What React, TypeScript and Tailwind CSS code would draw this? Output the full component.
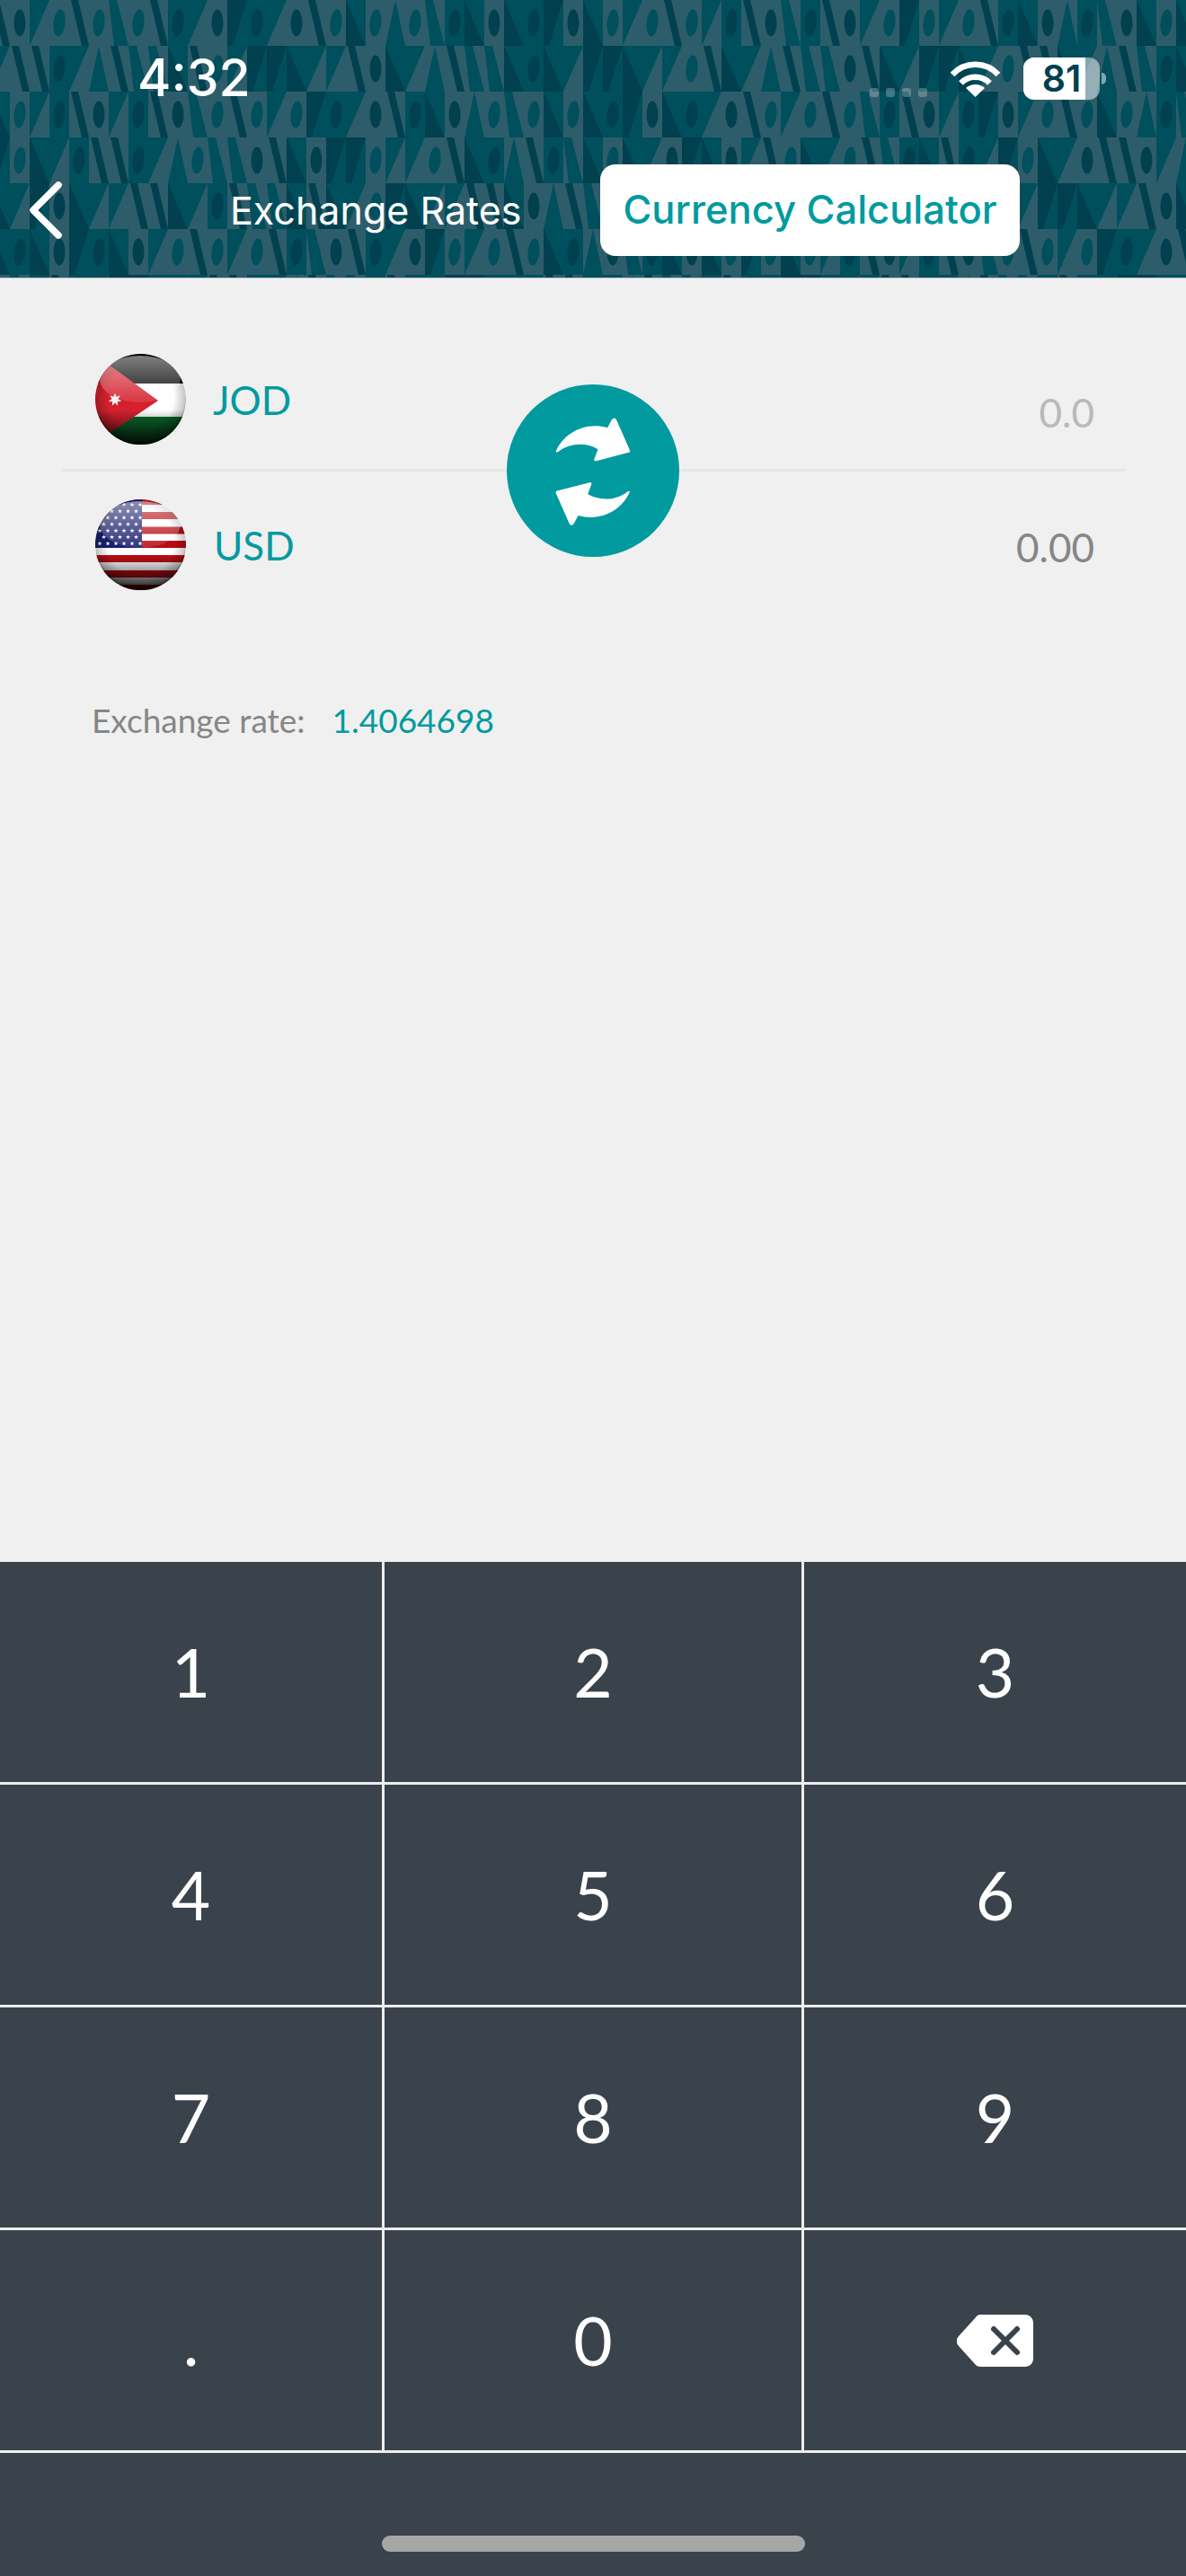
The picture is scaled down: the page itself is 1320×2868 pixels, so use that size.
const TILE_W = 22
const TILE_H = 51
const LIGHT = '#2d5d6b'
const BASE = '#004f5d'
const DARK = '#01404f'

// wedge tiles of the header artwork, ovals are picked per row below
const WEDGES = [4, 3, 5, 4, 6, 3, 4, 5, 8, 6, 5, 3, 4, 8, 3, 7, 5]
const OVALS = [0, 2, 1, 0, 2, 0, 1]

function kindAt(r: number, c: number) {
  const n = c * 5 + r * 7
  const wedge = WEDGES[n % WEDGES.length]
  const oval = OVALS[(c + r * 3) % OVALS.length]
  if (r === 0 || r === 2 || r === 5) return c % 2 === 1 ? oval : wedge
  if (r === 3) return c % 3 === 1 ? oval : wedge
  if (r === 6) return wedge
  return c % 8 === 3 ? oval : wedge
}

function Tile({ kind, x, y }: { kind: number; x: number; y: number }) {
  const w = TILE_W
  const h = TILE_H
  const cx = x + w / 2
  const cy = y + h / 2
  switch (kind) {
    case 0:
      return (
        <g>
          <rect x={x} y={y} width={w} height={h} fill={LIGHT} />
          <ellipse cx={cx} cy={cy} rx={6.5} ry={15} fill={BASE} transform={`rotate(6 ${cx} ${cy})`} />
        </g>
      )
    case 1:
      return (
        <g>
          <rect x={x} y={y} width={w} height={h} fill={BASE} />
          <ellipse cx={cx} cy={cy} rx={6.5} ry={15} fill={DARK} transform={`rotate(6 ${cx} ${cy})`} />
        </g>
      )
    case 2:
      return (
        <g>
          <rect x={x} y={y} width={w} height={h} fill={LIGHT} />
          <ellipse cx={cx} cy={cy} rx={6.5} ry={15} fill={DARK} />
        </g>
      )
    case 3:
      return (
        <g>
          <rect x={x} y={y} width={w} height={h} fill={BASE} />
          <path d={`M${x} ${y}L${x + w} ${y + h}H${x}Z`} fill={DARK} />
        </g>
      )
    case 4:
      return (
        <g>
          <rect x={x} y={y} width={w} height={h} fill={LIGHT} />
          <path d={`M${x + 2} ${y}H${x + 10}L${x + w} ${y + h}H${x + 14}Z`} fill={DARK} />
        </g>
      )
    case 5:
      return (
        <g>
          <rect x={x} y={y} width={w} height={h} fill={BASE} />
          <path d={`M${x + w} ${y}V${y + h}H${x}Z`} fill={LIGHT} />
        </g>
      )
    case 6:
      return (
        <g>
          <rect x={x} y={y} width={w} height={h} fill={DARK} />
          <path d={`M${x + w} ${y}V${y + h}H${x + 6}Z`} fill={BASE} />
        </g>
      )
    case 8:
      return (
        <g>
          <rect x={x} y={y} width={w} height={h} fill={LIGHT} />
          <path d={`M${x} ${y}H${x + 9}L${x + w} ${y + h}H${x + 6}Z`} fill={BASE} />
        </g>
      )
    default:
      return (
        <g>
          <rect x={x} y={y} width={w} height={h} fill={LIGHT} />
          <path d={`M${x} ${y + h}L${x + 11} ${y}L${x + w} ${y + h}Z`} fill={BASE} />
        </g>
      )
  }
}

function HeaderPattern() {
  const tiles = []
  for (let r = 0; r < 7; r++) {
    for (let c = 0; c < 62; c++) {
      tiles.push(<Tile key={`${r}-${c}`} kind={kindAt(r, c)} x={c * TILE_W - 11} y={r * TILE_H} />)
    }
  }
  return (
    <svg className="absolute inset-0" width="1320" height="310" viewBox="0 0 1320 310">
      {tiles}
    </svg>
  )
}

function starPoints(cx: number, cy: number, outer: number, inner: number, n: number) {
  const pts = []
  for (let i = 0; i < n * 2; i++) {
    const rad = i % 2 === 0 ? outer : inner
    const a = (Math.PI * i) / n - Math.PI / 2
    pts.push(`${(cx + rad * Math.cos(a)).toFixed(2)},${(cy + rad * Math.sin(a)).toFixed(2)}`)
  }
  return pts.join(' ')
}

function Gloss({ id }: { id: string }) {
  return (
    <>
      <defs>
        <radialGradient id={`${id}-edge`} cx="50%" cy="47%" r="52%">
          <stop offset="70%" stopColor="#000" stopOpacity="0" />
          <stop offset="94%" stopColor="#000" stopOpacity="0.22" />
          <stop offset="100%" stopColor="#000" stopOpacity="0.5" />
        </radialGradient>
        <linearGradient id={`${id}-shine`} x1="0" y1="0" x2="0" y2="1">
          <stop offset="0%" stopColor="#fff" stopOpacity="0.5" />
          <stop offset="100%" stopColor="#fff" stopOpacity="0.1" />
        </linearGradient>
        <linearGradient id={`${id}-low`} x1="0" y1="0" x2="0" y2="1">
          <stop offset="62%" stopColor="#000" stopOpacity="0" />
          <stop offset="100%" stopColor="#000" stopOpacity="0.85" />
        </linearGradient>
      </defs>
      <rect width="101" height="101" fill={`url(#${id}-low)`} />
      <circle cx="50.5" cy="50.5" r="50.5" fill={`url(#${id}-edge)`} />
      <ellipse cx="50" cy="28" rx="45" ry="26" fill={`url(#${id}-shine)`} />
    </>
  )
}

function JordanFlag() {
  return (
    <svg width="101" height="101" viewBox="0 0 101 101">
      <clipPath id="jod-clip">
        <circle cx="50.5" cy="50.5" r="50.5" />
      </clipPath>
      <g clipPath="url(#jod-clip)">
        <rect width="101" height="33" fill="#000" />
        <rect y="33" width="101" height="37" fill="#fff" />
        <rect y="70" width="101" height="31" fill="#0a6b2c" />
        <path d="M0 1L70 52L0 99Z" fill="#d5202e" />
        <polygon points={starPoints(22, 51, 7.5, 3.6, 7)} fill="#f2f2f2" />
        <Gloss id="jod" />
      </g>
    </svg>
  )
}

function UsaFlag() {
  const stripes = [-2, 14, 30.5, 46, 62, 79, 95]
  const stars = []
  for (let r = 0; r < 7; r++) {
    for (let c = 0; c < 6; c++) {
      const x = 5 + c * 9 + (r % 2 ? 4.5 : 0)
      if (x < 51) stars.push(<polygon key={`${r}-${c}`} points={starPoints(x, 6 + r * 7.2, 2.6, 1.1, 5)} fill="#fff" />)
    }
  }
  return (
    <svg width="101" height="101" viewBox="0 0 101 101">
      <clipPath id="usd-clip">
        <circle cx="50.5" cy="50.5" r="50.5" />
      </clipPath>
      <g clipPath="url(#usd-clip)">
        <rect width="101" height="101" fill="#fff" />
        {stripes.map((y) => (
          <rect key={y} y={y} width="101" height="8" fill="#b80d14" />
        ))}
        <rect width="52" height="54" fill="#1a1f6e" />
        {stars}
        <Gloss id="usd" />
      </g>
    </svg>
  )
}

function SwapIcon() {
  const arrow =
    'M238 278C262 222 330 178 410 200L424 174C429 166 436 166 440 174L485 276C486 280 484 282 481 283L372 311C366 312 364 309 366 304L378 272C340 248 282 250 246 280C240 284 236 282 238 278Z'
  return (
    <svg width="192" height="192" viewBox="73 55 577 577">
      <path d={arrow} fill="#fff" />
      <path d={arrow} fill="#fff" transform="rotate(180 361 347)" />
    </svg>
  )
}

function Wifi() {
  return (
    <svg width="57" height="41" viewBox="0 0 57 41" fill="none">
      <path d="M3 16C17 1 40 1 54 16" stroke="#fff" strokeWidth="6.5" />
      <path d="M12.5 25.5C21 16.5 36 16.5 44.5 25.5" stroke="#fff" strokeWidth="6.5" />
      <path d="M28.5 41L18 31C24 25.5 33 25.5 39 31Z" fill="#fff" />
    </svg>
  )
}

function Battery() {
  return (
    <div className="flex items-center gap-[2px]">
      <div className="relative w-[85px] h-[47px] rounded-[12px] bg-white/50 flex items-center justify-center">
        <div className="absolute inset-y-0 left-0 w-[69px] rounded-l-[12px] bg-white" />
        <span className="relative font-semibold text-[41px] leading-none text-[#01404f]">81</span>
      </div>
      <div className="w-[5px] h-[13px] rounded-r-full bg-white/50" />
    </div>
  )
}

function BackspaceIcon() {
  return (
    <svg width="85" height="58" viewBox="0 0 85 58">
      <path
        d="M26 0H76C81 0 85 4 85 9V49C85 54 81 58 76 58H26C24 58 22 57 21 56L2 35C-1 32 -1 27 2 24L21 3C22 1 24 0 26 0Z"
        fill="#fff"
      />
      <path d="M41 16L67 42M67 16L41 42" stroke="#3a424b" strokeWidth="6" strokeLinecap="round" />
    </svg>
  )
}

const KEYS = ['1', '2', '3', '4', '5', '6', '7', '8', '9', '.', '0', 'back']

export default function App() {
  return (
    <div className="w-[1320px] h-[2868px] flex flex-col bg-[#f0f0f0] font-[Lato,sans-serif]">
      <header className="relative h-[310px] overflow-hidden border-b border-[#b8c4c6] font-[Inter,sans-serif]">
        <HeaderPattern />
        <div className="relative flex items-start h-[183px]">
          <span className="ml-[153px] mt-[55px] text-[57px] leading-[64px] font-medium text-white">4:32</span>
          <div className="ml-auto mr-[89px] mt-[64px] flex items-start">
            <div className="mt-[34px] mr-[25px] flex gap-[8px]">
              <span className="w-[10px] h-[10px] rounded-[3px] bg-white/25" />
              <span className="w-[10px] h-[10px] rounded-[3px] bg-white/25" />
              <span className="w-[10px] h-[10px] rounded-[3px] bg-white/25" />
              <span className="w-[10px] h-[10px] rounded-[3px] bg-white/25" />
            </div>
            <div className="mt-[3px] mr-[25px]">
              <Wifi />
            </div>
            <Battery />
          </div>
        </div>
        <nav className="relative flex items-center h-[102px]">
          <svg className="ml-[32px]" width="38" height="66" viewBox="0 0 38 66" fill="none">
            <path d="M33 5L5 33L33 61" stroke="#fff" strokeWidth="7.5" strokeLinecap="round" strokeLinejoin="round" />
          </svg>
          <span className="ml-[186px] w-[324px] whitespace-nowrap text-[43px] leading-none text-white">Exchange Rates</span>
          <span className="ml-[88px] w-[467px] h-[102px] rounded-[17px] bg-white flex items-center justify-center whitespace-nowrap text-[43.5px] leading-none font-medium text-[#009a9f]">
            Currency Calculator
          </span>
        </nav>
      </header>

      <main className="relative flex-1 pt-[60px]">
        <div className="mx-[68px] h-[155px] pl-[38px] pr-[34px] pt-[24px] border-b-[3px] border-[#e6e6e6] flex justify-between items-start">
          <div className="flex items-center gap-[30px]">
            <JordanFlag />
            <span className="text-[44px] leading-none text-[#009a9f]">JOD</span>
          </div>
          <span className="mt-[43px] text-[44px] leading-none text-[#b9b9b9]">0.0</span>
        </div>
        <div className="mx-[68px] pl-[38px] pr-[34px] pt-[31px] flex justify-between items-start">
          <div className="flex items-center gap-[31px]">
            <UsaFlag />
            <span className="text-[44px] leading-none text-[#009a9f]">USD</span>
          </div>
          <span className="mt-[31px] text-[44px] leading-none text-[#868686]">0.00</span>
        </div>
        <div className="ml-[102px] mt-[126px] flex items-baseline gap-[30px] text-[37px] leading-none">
          <span className="text-[#868686]">Exchange rate:</span>
          <span className="text-[#009a9f]">1.4064698</span>
        </div>
        <div className="absolute left-[564px] top-[118px] w-[192px] h-[192px] rounded-full bg-[#009a9f]">
          <SwapIcon />
        </div>
      </main>

      <section className="bg-[#3a424b]">
        <div className="grid grid-cols-[425px_1fr_425px] auto-rows-[245px] gap-[3px] pt-[2px] pb-[3px] bg-[#eeeeee]">
          {KEYS.map((k) => (
            <button key={k} className="bg-[#3a424b] flex items-center justify-center text-white text-[75px] leading-none">
              {k === 'back' ? <BackspaceIcon /> : k}
            </button>
          ))}
        </div>
        <div className="h-[137px] pt-[92px] flex justify-center">
          <div className="w-[471px] h-[18px] rounded-full bg-[#a6a6a6]" />
        </div>
      </section>
    </div>
  )
}
